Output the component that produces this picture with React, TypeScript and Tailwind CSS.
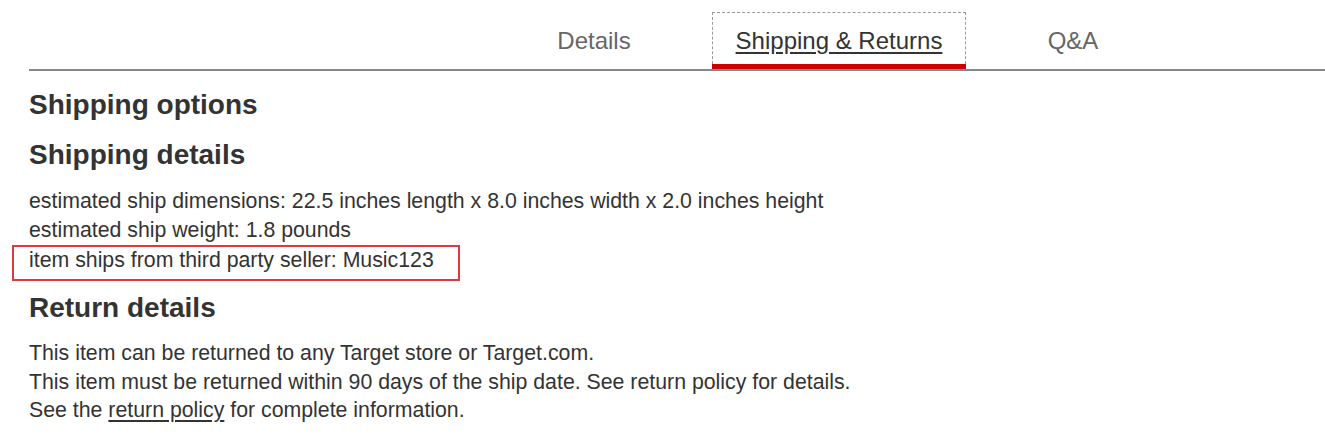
export default function App() {
  return (
    <div
      className="h-[446px] w-[1325px] overflow-hidden bg-white text-[#333]"
      style={{ fontFamily: '"Liberation Sans", Arial, sans-serif' }}
    >
      <div className="ml-[29px] border-b-2 border-[#888]">
        <nav className="flex h-[69px] items-end">
          <div className="w-[447px]" />
          <button className="flex h-[57px] w-[236px] items-center justify-center text-[24px] text-[#666]">
            Details
          </button>
          <button className="relative flex h-[57px] w-[254px] items-center justify-center border border-b-0 border-dashed border-[#999] text-[24px] text-[#333]">
            <span className="underline underline-offset-[3px]">Shipping &amp; Returns</span>
            <span className="absolute -left-px -right-px bottom-0 h-[5px] bg-[#cc0000]" />
          </button>
          <button className="flex h-[57px] w-[214px] items-center justify-center text-[24px] text-[#666]">
            Q&amp;A
          </button>
        </nav>
      </div>

      <div className="pl-[29px]">
        <h2 className="mt-[18px] text-[28px] font-bold leading-[32px]">Shipping options</h2>
        <h2 className="mt-[18px] text-[28px] font-bold leading-[32px]">Shipping details</h2>
        <div className="mt-[16px] text-[21.3px] leading-[29px]">
          <p>estimated ship dimensions: 22.5 inches length x 8.0 inches width x 2.0 inches height</p>
          <p>estimated ship weight: 1.8 pounds</p>
          <p className="-ml-[17px] w-[448px] border-2 border-[#e0383e] pb-[5px] pl-[15px] leading-[27px]">
            item ships from third party seller: Music123
          </p>
        </div>
        <h2 className="mt-[11px] text-[28px] font-bold leading-[32px]">Return details</h2>
        <div className="mt-[15px] text-[21.3px] leading-[28.5px]">
          <p>This item can be returned to any Target store or Target.com.</p>
          <p>This item must be returned within 90 days of the ship date. See return policy for details.</p>
          <p>
            See the <span className="underline underline-offset-[3px]">return policy</span> for complete
            information.
          </p>
        </div>
      </div>
    </div>
  );
}
